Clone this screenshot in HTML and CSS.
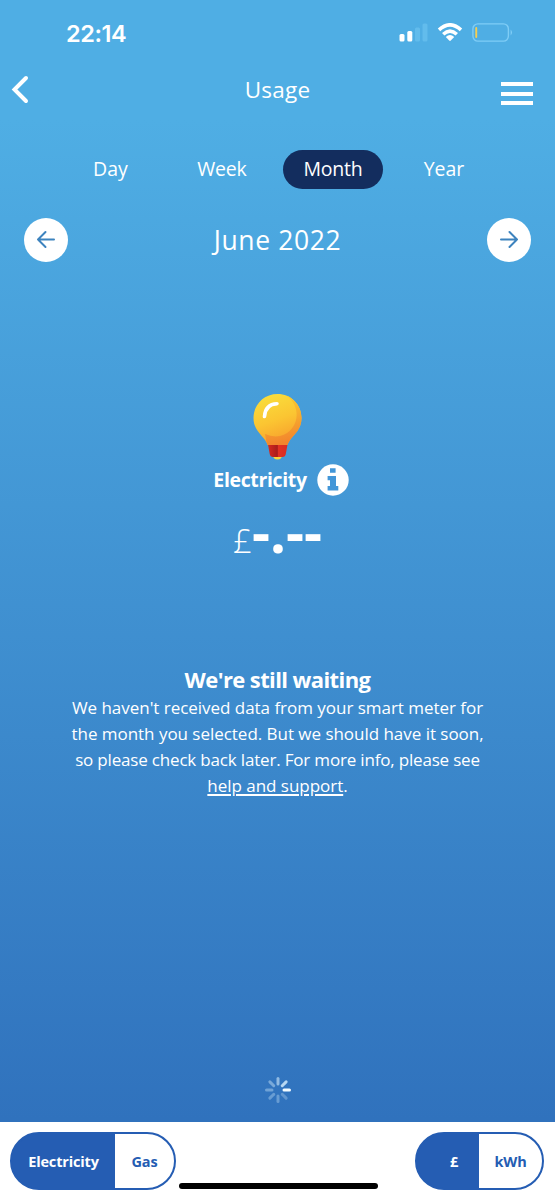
FILE: index.html
```html
<!DOCTYPE html>
<html lang="en">
<head>
    <meta charset="UTF-8">
    <meta name="viewport" content="width=device-width, initial-scale=1.0">
    <title>Usage</title>
    <link rel="stylesheet" href="styles.css">
</head>
<body>

    <div class="status-bar">
        <span class="clock">22:14</span>
        <div class="status-icons">
            <svg class="signal" width="30" height="20" viewBox="0 0 30 20" fill="#fff">
                <rect x="1.5" y="11" width="5" height="7.500" rx="1.500"/>
                <rect x="9.300" y="8" width="5" height="10.500" rx="1.500"/>
                <rect x="17" y="4.500" width="5" height="14" rx="1.500" fill="#6fc5f2" opacity="0.600"/>
                <rect x="24.500" y="0.500" width="5" height="18" rx="1.500" fill="#6fc5f2" opacity="0.600"/>
            </svg>
            <svg class="wifi" width="26" height="20" viewBox="0 0 26 20">
                <g fill="none" stroke="#fff" stroke-width="3.500">
                    <path d="M2 6.900 Q13 -3.300 24 6.900"/>
                    <path d="M6.200 11.200 Q13 4.900 19.800 11.200"/>
                </g>
                <path d="M8.800 14 Q13 10.200 17.200 14 L13.800 17.600 Q13 18.300 12.200 17.600 Z" fill="#fff"/>
            </svg>
            <svg class="battery" width="42" height="20" viewBox="0 0 42 20">
                <rect x="0.900" y="0.900" width="35.500" height="17.200" rx="5" fill="none" stroke="#7fcdf6" stroke-width="1.400"/>
                <rect x="3.300" y="4" width="1.900" height="11" rx="0.900" fill="#f5ce52"/>
                <path d="M38.600 6.500 Q41.500 9.500 38.600 12.500 Z" fill="#7fcdf6"/>
            </svg>
        </div>
    </div>

    <header class="top-bar">
        <svg class="back" width="20" height="30" viewBox="0 0 20 30">
            <path d="M17 3 L5.500 14.500 L17 26" fill="none" stroke="#fff" stroke-width="4" stroke-linecap="round" stroke-linejoin="miter"/>
        </svg>
        <h1 class="page-title">Usage</h1>
        <div class="menu"><i></i><i></i><i></i></div>
    </header>

    <nav class="tabs">
        <span class="tab">Day</span>
        <span class="tab">Week</span>
        <span class="tab active">Month</span>
        <span class="tab">Year</span>
    </nav>

    <div class="period">
        <div class="round-btn">
            <svg width="20" height="20" viewBox="0 0 20 20" fill="none" stroke="#3d83be" stroke-width="2" stroke-linecap="round" stroke-linejoin="round">
                <path d="M18 9.500 H2 M9.500 2 L2 9.500 L9.500 17"/>
            </svg>
        </div>
        <h2 class="period-title">June 2022</h2>
        <div class="round-btn">
            <svg width="20" height="20" viewBox="0 0 20 20" fill="none" stroke="#3d83be" stroke-width="2" stroke-linecap="round" stroke-linejoin="round">
                <path d="M2 9.500 H18 M10.500 2 L18 9.500 L10.500 17"/>
            </svg>
        </div>
    </div>

    <section class="reading">
        <svg class="bulb" width="50" height="68" viewBox="0 0 50 68">
            <defs>
                <linearGradient id="glass" gradientUnits="userSpaceOnUse" x1="12" y1="2" x2="30" y2="53">
                    <stop offset="0" stop-color="#f9de3c"/>
                    <stop offset="0.500" stop-color="#fbc532"/>
                    <stop offset="1" stop-color="#f79a2c"/>
                </linearGradient>
                <linearGradient id="shade" gradientUnits="userSpaceOnUse" x1="28" y1="2" x2="38" y2="48">
                    <stop offset="0" stop-color="#f9cf30"/>
                    <stop offset="1" stop-color="#f3852d"/>
                </linearGradient>
                <linearGradient id="cap" x1="0" y1="0" x2="1" y2="0">
                    <stop offset="0" stop-color="#d8291f"/>
                    <stop offset="0.480" stop-color="#a81d1c"/>
                    <stop offset="0.520" stop-color="#e23224"/>
                    <stop offset="1" stop-color="#d92c22"/>
                </linearGradient>
                <clipPath id="outline">
                    <path d="M24.500 1 C11 1 0.500 11.500 0.500 25 C0.500 36 7.500 41 12 47 Q14 50 15 53 H34 Q35 50 37 47 C41.500 41 48.500 36 48.500 25 C48.500 11.500 38 1 24.500 1 Z"/>
                </clipPath>
            </defs>
            <path d="M19.500 61 H29.500 Q29 66.500 24.500 66.500 Q20 66.500 19.500 61 Z" fill="#fbd638"/>
            <path d="M15 51.500 H34.500 L32.800 61 Q32.300 64 29.500 64 H20 Q17.200 64 16.700 61 Z" fill="url(#cap)"/>
            <g clip-path="url(#outline)">
                <rect width="50" height="52" fill="url(#glass)"/>
                <path d="M34 3 C50 15 45 39 27 43 Q20 44.500 12 41 L14 52 H50 V0 Z" fill="url(#shade)"/>
            </g>
            <path d="M11.500 23.500 C12 15 17 11 24 10.700" fill="none" stroke="#fff" stroke-width="3.600" stroke-linecap="round"/>
        </svg>
        <div class="fuel">
            <span class="fuel-name">Electricity</span>
            <svg class="info" width="32" height="32" viewBox="0 0 32 32">
                <circle cx="16" cy="16" r="15.700" fill="#fff"/>
                <path d="M13 4.300 H18.600 V8.800 H13 Z M10.600 12 H19 V22 H21.300 V26.500 H10.600 V22 H13 V16.300 H10.600 Z" fill="#4296d8"/>
            </svg>
        </div>
        <div class="amount"><span class="currency">£</span><span class="figure">-.--</span></div>
    </section>

    <section class="notice">
        <h3 class="notice-title">We're still waiting</h3>
        <p class="notice-text">
            <span class="line">We haven't received data from your smart meter for</span>
            <span class="line">the month you selected. But we should have it soon,</span>
            <span class="line tight">so please check back later. For more info, please see</span>
            <span class="line"><a class="help">help and support</a>.</span>
        </p>
    </section>

    <div class="spinner">
        <svg width="28" height="28" viewBox="-14 -14 28 28" stroke="#cfe9fb" stroke-width="3" stroke-linecap="round">
            <path d="M6 0 H11.500" stroke="#f2fbff"/>
            <path d="M6 0 H11.500" transform="rotate(45)" opacity="0.300"/>
            <path d="M6 0 H11.500" transform="rotate(90)" opacity="0.350"/>
            <path d="M6 0 H11.500" transform="rotate(135)" opacity="0.350"/>
            <path d="M6 0 H11.500" transform="rotate(180)" opacity="0.400"/>
            <path d="M6 0 H11.500" transform="rotate(225)" opacity="0.450"/>
            <path d="M6 0 H11.500" transform="rotate(270)" opacity="0.600"/>
            <path d="M6 0 H11.500" transform="rotate(315)" opacity="0.850"/>
        </svg>
    </div>

    <footer class="bottom-bar">
        <div class="toggle fuel-toggle">
            <span class="option selected">Electricity</span>
            <span class="option">Gas</span>
        </div>
        <div class="home-indicator"></div>
        <div class="toggle unit-toggle">
            <span class="option selected">£</span>
            <span class="option">kWh</span>
        </div>
    </footer>

</body>
</html>
```
FILE: styles.css
```css
* {
    box-sizing: border-box;
}

body {
    margin: 0;
    height: 1200px;
    display: flex;
    flex-direction: column;
    overflow: hidden;
    font-family: 'Open Sans', 'Noto Sans', sans-serif;
    font-weight: 400;
    color: white;
    background: linear-gradient(#4faee4 0, #4faee4 120px, #3072bd 1120px);
}

h1, h2, h3, p {
    margin: 0;
    font-weight: inherit;
}

svg {
    display: block;
    flex: none;
}

.status-bar {
    height: 66px;
    padding: 0 41px 0 66px;
    display: flex;
    align-items: center;
    justify-content: space-between;
}

.clock {
    font-family: 'Inter', sans-serif;
    font-size: 23.5px;
    font-weight: 600;
    letter-spacing: -0.4px;
}

.status-icons {
    display: flex;
    gap: 9px;
}

.top-bar {
    height: 48px;
    padding: 0 22px 0 9px;
    display: grid;
    grid-template-columns: 32px 1fr 32px;
    align-items: center;
}

.page-title {
    font-size: 22.5px;
    line-height: 46px;
    text-align: center;
    padding: 0 0 1px 13px;
    letter-spacing: 0.2px;
}

.menu {
    display: flex;
    flex-direction: column;
    gap: 5.5px;
    padding-top: 7px;
}

.menu i {
    height: 4px;
    background: white;
}

.tabs {
    margin-top: 35px;
    height: 40px;
    padding: 0 71px 0 72px;
    display: flex;
    align-items: center;
    font-size: 19.5px;
}

.tab {
    width: 77px;
    line-height: 37px;
    padding-bottom: 2px;
    text-align: center;
}

.tab:nth-child(2) {
    width: 90px;
    margin: 0 16px 0 28px;
    letter-spacing: -0.2px;
}

.tab.active {
    width: 100px;
    background: #132d5e;
    border-radius: 20px;
    letter-spacing: -0.2px;
}

.tab:last-child {
    width: 80px;
    margin-left: 21px;
}

.period {
    margin-top: 29px;
    height: 44px;
    padding: 0 24px;
    display: flex;
    align-items: center;
    justify-content: space-between;
}

.round-btn {
    width: 44px;
    height: 44px;
    display: flex;
    align-items: center;
    justify-content: center;
    border-radius: 50%;
    background: white;
}

.period-title {
    font-size: 26.5px;
    letter-spacing: 0.6px;
}

.reading {
    margin-top: 131px;
    display: flex;
    flex-direction: column;
    align-items: center;
}

.fuel {
    margin-top: 3px;
    padding-left: 7px;
    height: 32px;
    display: flex;
    align-items: center;
    gap: 10px;
}

.fuel-name {
    padding-bottom: 2px;
    font-size: 19.5px;
    font-weight: 700;
    letter-spacing: -0.35px;
}

.amount {
    height: 70px;
    line-height: 70px;
    display: flex;
    align-items: baseline;
}

.currency {
    font-size: 33px;
    font-weight: 300;
}

.figure {
    font-size: 56px;
    font-weight: 700;
}

.notice {
    margin-top: 98px;
    text-align: center;
}

.notice-title {
    font-size: 22px;
    line-height: 30px;
    font-weight: 700;
    letter-spacing: -0.6px;
}

.notice-text {
    padding-top: 1px;
    font-size: 17px;
    line-height: 26px;
    letter-spacing: -0.03px;
}

.line {
    display: block;
    white-space: nowrap;
}

.line.tight {
    letter-spacing: -0.18px;
}

.help {
    text-decoration: underline;
    text-decoration-thickness: 2px;
    text-underline-offset: 2px;
}

.spinner {
    margin-top: auto;
    height: 64px;
    display: flex;
    justify-content: center;
    align-items: center;
}

.bottom-bar {
    height: 78px;
    padding: 10px 11px 0 10px;
    display: flex;
    background: white;
}

.toggle {
    height: 58px;
    display: flex;
    border: 2px solid #255db3;
    border-radius: 29px;
    overflow: hidden;
}

.option {
    flex: 1;
    line-height: 55px;
    text-align: center;
    font-size: 14.5px;
    font-weight: 700;
    letter-spacing: -0.15px;
    color: #255db3;
}

.option.selected {
    flex: none;
    color: white;
}

.fuel-toggle {
    width: 166px;
    background: linear-gradient(90deg, #255db3 105px, white 105px) border-box;
}

.fuel-toggle .selected {
    width: 103px;
}

.unit-toggle {
    width: 129px;
    margin-left: auto;
    background: linear-gradient(90deg, #255db3 64px, white 64px) border-box;
}

.unit-toggle .selected {
    width: 62px;
    padding-left: 12px;
}

.home-indicator {
    width: 199px;
    height: 6px;
    margin: 51px 0 0 3px;
    border-radius: 3px;
    background: black;
}
```
